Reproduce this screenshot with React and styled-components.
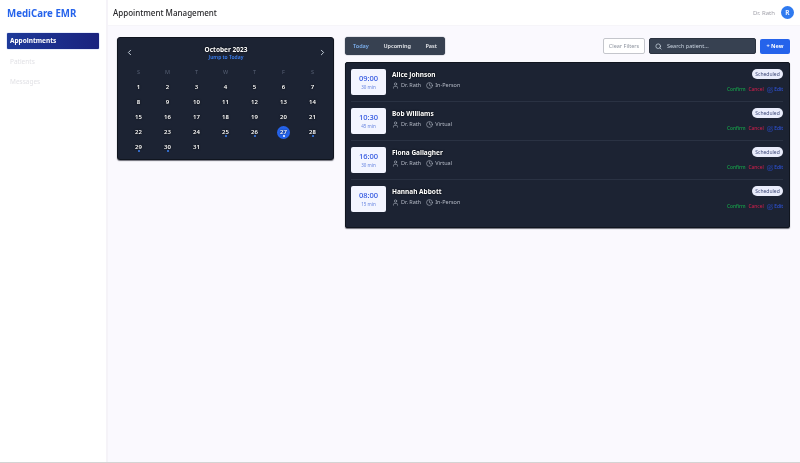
import React from 'react';
import styled, { createGlobalStyle } from 'styled-components';
import { ChevronLeft, ChevronRight, Search, User, Clock, SquarePen } from 'lucide-react';

const GlobalStyle = createGlobalStyle`
  html, body { margin: 0; padding: 0; height: 100%; }
  body { font-family: "Noto Sans", Inter, sans-serif; background: #faf9fe; }
  * { box-sizing: border-box; }
`;

const appointments = [
  { time: '09:00', length: '30 min', name: 'Alice Johnson', kind: 'In-Person' },
  { time: '10:30', length: '45 min', name: 'Bob Williams', kind: 'Virtual' },
  { time: '16:00', length: '30 min', name: 'Fiona Gallagher', kind: 'Virtual' },
  { time: '08:00', length: '15 min', name: 'Hannah Abbott', kind: 'In-Person' },
];

const weekDays = ['S', 'M', 'T', 'W', 'T', 'F', 'S'];
const days = Array.from({ length: 31 }, (_, i) => i + 1);
const marked = [25, 26, 27, 28, 29, 30];

const App = () => (
  <>
    <GlobalStyle />
    <Page>
      <Sidebar>
        <Logo>MediCare EMR</Logo>
        <NavItem active>Appointments</NavItem>
        <NavItem>Patients</NavItem>
        <NavItem>Messages</NavItem>
      </Sidebar>
      <Content>
        <Header>
          <Title>Appointment Management</Title>
          <UserBox>
            <UserName>Dr. Rath</UserName>
            <Avatar>R</Avatar>
          </UserBox>
        </Header>
        <Main>
          <Calendar>
            <CalendarHead>
              <ChevronLeft size={9} strokeWidth={2.5} />
              <MonthBox>
                <Month>October 2023</Month>
                <JumpToday>Jump to Today</JumpToday>
              </MonthBox>
              <ChevronRight size={9} strokeWidth={2.5} />
            </CalendarHead>
            <DayGrid>
              {weekDays.map((d, i) => <WeekDay key={i}>{d}</WeekDay>)}
              {days.map((d) => (
                <Day key={d} selected={d === 27} marked={marked.includes(d)}>{d}</Day>
              ))}
            </DayGrid>
          </Calendar>
          <Right>
            <Toolbar>
              <Tabs>
                <Tab active>Today</Tab>
                <Tab>Upcoming</Tab>
                <Tab>Past</Tab>
              </Tabs>
              <Tools>
                <ClearButton>Clear Filters</ClearButton>
                <SearchBox>
                  <Search size={7} strokeWidth={2.5} />
                  <span>Search patient...</span>
                </SearchBox>
                <NewButton>+ New</NewButton>
              </Tools>
            </Toolbar>
            <List>
              {appointments.map((a) => (
                <Row key={a.name}>
                  <TimeCard>
                    <Time>{a.time}</Time>
                    <Length>{a.length}</Length>
                  </TimeCard>
                  <Info>
                    <Name>{a.name}</Name>
                    <Meta>
                      <MetaItem><User size={7} />Dr. Rath</MetaItem>
                      <MetaItem><Clock size={7} />{a.kind}</MetaItem>
                    </Meta>
                  </Info>
                  <Side>
                    <Badge>Scheduled</Badge>
                    <Actions>
                      <Action color="#16a34a">Confirm</Action>
                      <Action color="#c81e4a">Cancel</Action>
                      <Action color="#2f55e0"><SquarePen size={6} />Edit</Action>
                    </Actions>
                  </Side>
                </Row>
              ))}
            </List>
          </Right>
        </Main>
      </Content>
    </Page>
  </>
);

export default App;

const Page = styled.div`
  display: flex;
  height: 463px;
  border-bottom: 1px solid #d4d4d4;
  filter: blur(0.35px);
`;

const Sidebar = styled.aside`
  width: 108px;
  flex-shrink: 0;
  background: #fff;
  border-right: 2px solid #f5f3f8;
  padding: 0 7px;
`;

const Logo = styled.div`
  height: 33px;
  padding-top: 7px;
  font-size: 9.7px;
  font-weight: 700;
  line-height: 13px;
  color: #2563eb;
`;

const NavItem = styled.div`
  width: 92px;
  height: 16px;
  margin-bottom: 4.5px;
  padding-left: 3px;
  border-radius: 1px;
  font-size: 6.5px;
  line-height: 16px;
  font-weight: ${({ active }) => (active ? 700 : 400)};
  color: ${({ active }) => (active ? '#fff' : '#e2e2e6')};
  background: ${({ active }) => (active ? 'linear-gradient(90deg, #1e3a9a, #1a237e)' : 'transparent')};
  box-shadow: ${({ active }) => (active ? '0 0 1px #1d4ed8' : 'none')};
`;

const Content = styled.div`
  flex: 1;
  display: flex;
  flex-direction: column;
  min-width: 0;
`;

const Header = styled.header`
  height: 26px;
  flex-shrink: 0;
  background: #fff;
  border-bottom: 1px solid #f6f5f9;
  display: flex;
  align-items: center;
  justify-content: space-between;
  padding: 0 6px 0 5px;
`;

const Title = styled.h1`
  margin: 0;
  font-size: 8px;
  font-weight: 500;
  color: #27272a;
`;

const UserBox = styled.div`
  display: flex;
  align-items: center;
  gap: 6px;
`;

const UserName = styled.span`
  font-size: 6px;
  color: #a1a1aa;
`;

const Avatar = styled.div`
  width: 13px;
  height: 13px;
  border-radius: 50%;
  background: #2f7af0;
  color: #e8efff;
  font-size: 6.5px;
  font-weight: 700;
  display: flex;
  align-items: center;
  justify-content: center;
`;

const Main = styled.main`
  flex: 1;
  display: flex;
  align-items: flex-start;
  gap: 11px;
  padding: 11px 10px 0 9px;
`;

const Calendar = styled.section`
  width: 217px;
  height: 123px;
  flex-shrink: 0;
  background: #1c2333;
  border-radius: 3px;
  border: 1px solid #10151f;
  box-shadow: 0 1px 1px rgba(15, 18, 30, 0.6);
  padding: 7px 6px 0;
  color: #fff;
`;

const CalendarHead = styled.div`
  display: flex;
  align-items: flex-start;
  justify-content: space-between;
  padding: 2px 0 0 1px;
  color: #cbd5e1;
  svg { margin-top: 1px; }
`;

const MonthBox = styled.div`
  margin-top: -1px;
  display: flex;
  flex-direction: column;
  align-items: center;
`;

const Month = styled.div`
  font-size: 6.5px;
  line-height: 8px;
  font-weight: 700;
  color: #fff;
  text-shadow: 0 0 2px #000;
`;

const JumpToday = styled.div`
  font-size: 5px;
  line-height: 6px;
  font-weight: 600;
  color: #3b82f6;
`;

const DayGrid = styled.div`
  display: grid;
  grid-template-columns: repeat(7, 1fr);
  grid-auto-rows: 15px;
  margin-top: 4.5px;
`;

const WeekDay = styled.div`
  display: flex;
  align-items: center;
  justify-content: center;
  font-size: 5.5px;
  color: #566074;
`;

const Day = styled.div`
  position: relative;
  justify-self: center;
  align-self: center;
  width: 13px;
  height: 13px;
  border-radius: 50%;
  display: flex;
  align-items: center;
  justify-content: center;
  font-size: 6px;
  font-weight: 600;
  color: #fff;
  text-shadow: 0 0 2px #000;
  background: ${({ selected }) => (selected ? '#2563eb' : 'transparent')};

  &::after {
    content: '';
    display: ${({ marked }) => (marked ? 'block' : 'none')};
    position: absolute;
    left: 5.5px;
    bottom: 1.5px;
    width: 2px;
    height: 2px;
    border-radius: 50%;
    background: ${({ selected }) => (selected ? '#fff' : '#3b82f6')};
  }
`;

const Right = styled.section`
  flex: 1;
  min-width: 0;
`;

const Toolbar = styled.div`
  height: 18px;
  display: flex;
  align-items: center;
  justify-content: space-between;
  margin-bottom: 7px;
`;

const Tabs = styled.div`
  display: flex;
  align-items: center;
  width: 100px;
  height: 18px;
  padding: 0 3px;
  justify-content: space-between;
  border-radius: 3px;
  background: #374151;
  box-shadow: 0 0 1px #1f2937;
`;

const Tab = styled.div`
  padding: 0 5px;
  font-size: 5.5px;
  font-weight: 600;
  color: ${({ active }) => (active ? '#7cb0ee' : '#e5e7eb')};
`;

const Tools = styled.div`
  display: flex;
  align-items: center;
  gap: 4px;
`;

const ClearButton = styled.div`
  width: 42px;
  height: 16px;
  border: 1px solid #c4c6cc;
  border-radius: 2px;
  background: #fff;
  color: #8f95a0;
  font-size: 5.5px;
  display: flex;
  align-items: center;
  justify-content: center;
`;

const SearchBox = styled.div`
  width: 107px;
  height: 16px;
  border-radius: 2px;
  background: #374151;
  border: 1px solid #2b3340;
  color: #cbd5e1;
  font-size: 5.5px;
  display: flex;
  align-items: center;
  gap: 5px;
  padding-left: 5px;
`;

const NewButton = styled.div`
  width: 30px;
  height: 15px;
  border-radius: 2px;
  background: #2563eb;
  color: #fff;
  font-size: 5.5px;
  font-weight: 700;
  display: flex;
  align-items: center;
  justify-content: center;
`;

const List = styled.div`
  height: 166px;
  background: #1c2333;
  border-radius: 2px;
  border: 1px solid #10151f;
  box-shadow: 0 1px 1px rgba(15, 18, 30, 0.6);
  padding: 0 6px 0 5px;
`;

const Row = styled.div`
  height: 39px;
  display: flex;
  align-items: flex-start;
  padding-top: 5px;
  border-bottom: 1px solid #2a3243;

  &:last-child { border-bottom: none; }
`;

const TimeCard = styled.div`
  width: 35px;
  height: 26px;
  margin-top: 1px;
  border-radius: 2px;
  background: #f3f5ff;
  display: flex;
  flex-direction: column;
  align-items: center;
  justify-content: center;
  gap: 2px;
`;

const Time = styled.div`
  font-size: 7.5px;
  line-height: 9px;
  font-weight: 500;
  color: #2f55e0;
`;

const Length = styled.div`
  font-size: 4.5px;
  line-height: 5px;
  color: #6382e0;
`;

const Info = styled.div`
  margin-left: 6px;
  flex: 1;
  padding-top: 2px;
`;

const Name = styled.div`
  font-size: 6.5px;
  line-height: 9px;
  font-weight: 700;
  color: #fff;
  text-shadow: 0 0 2px #000;
`;

const Meta = styled.div`
  display: flex;
  gap: 5px;
  margin-top: 2px;
`;

const MetaItem = styled.div`
  display: flex;
  align-items: center;
  gap: 2px;
  font-size: 5.5px;
  line-height: 9px;
  color: #b4bac6;
`;

const Side = styled.div`
  display: flex;
  flex-direction: column;
  align-items: flex-end;
  padding-top: 1px;
`;

const Badge = styled.div`
  height: 10px;
  width: 31px;
  text-align: center;
  border-radius: 5px;
  background: #e9ecfb;
  color: #3f4a7a;
  font-size: 5px;
  line-height: 10px;
`;

const Actions = styled.div`
  display: flex;
  gap: 3px;
  margin-top: 7px;
`;

const Action = styled.div`
  display: flex;
  align-items: center;
  gap: 1.5px;
  font-size: 4.8px;
  line-height: 7px;
  font-weight: 500;
  color: ${({ color }) => color};
`;
